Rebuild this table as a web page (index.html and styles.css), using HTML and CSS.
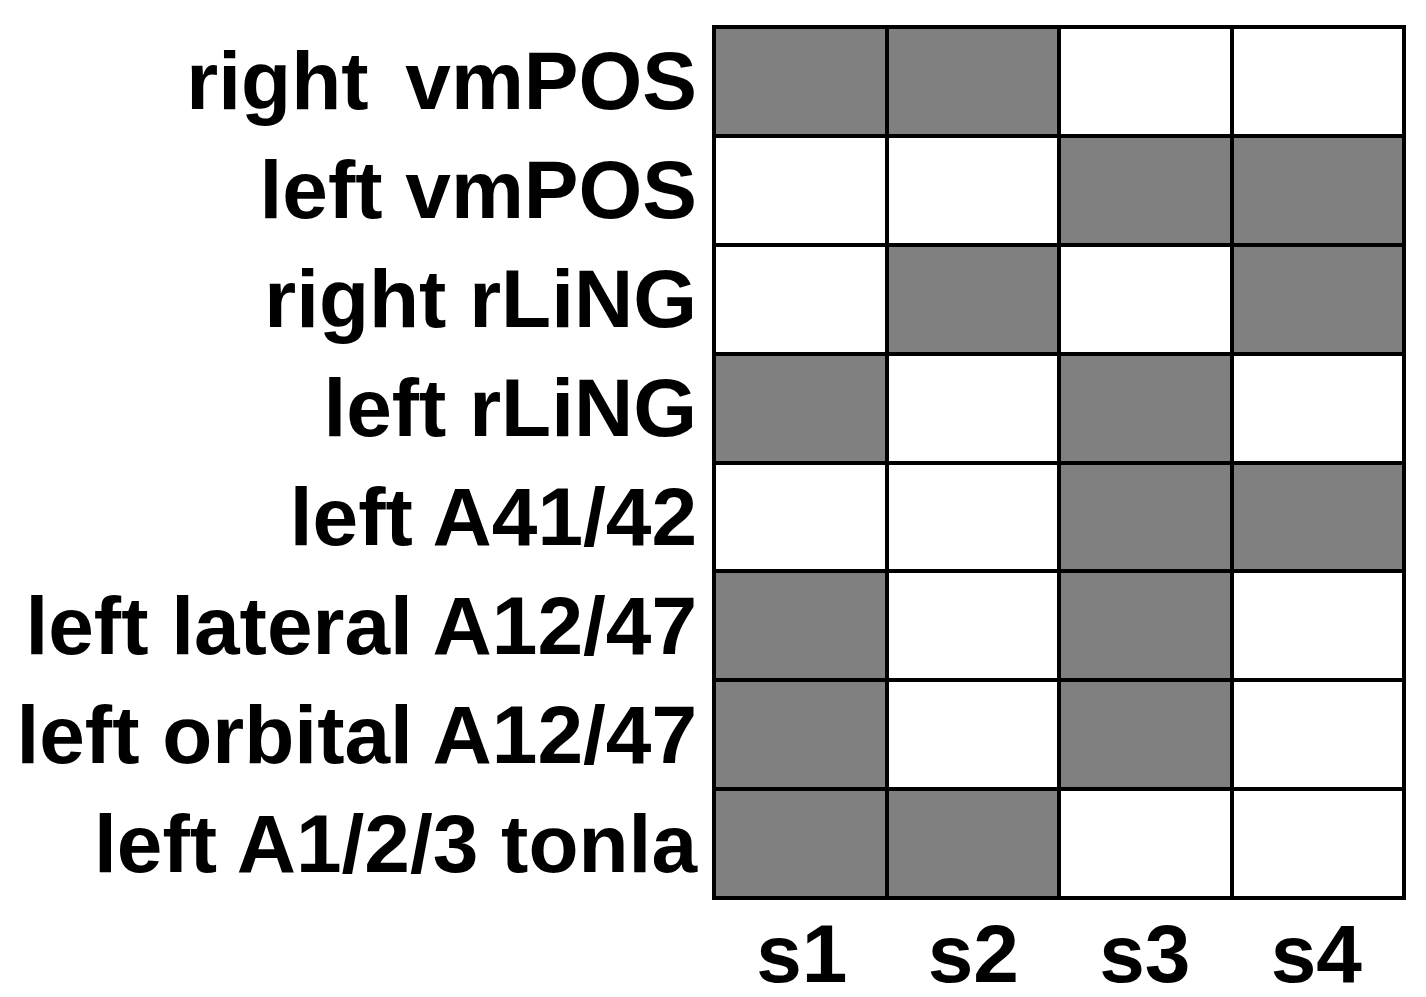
FILE: index.html
```html
<!DOCTYPE html>
<html lang="en">
<head>
    <meta charset="UTF-8">
    <meta name="viewport" content="width=device-width, initial-scale=1.0">
    <title>Region by Session Map</title>
    <link rel="stylesheet" href="styles.css">
</head>
<body>

    <div class="figure">
        <!-- Row labels -->
        <div class="row-labels">
            <div class="label wide-gap">right vmPOS</div>
            <div class="label">left vmPOS</div>
            <div class="label">right rLiNG</div>
            <div class="label">left rLiNG</div>
            <div class="label">left A41/42</div>
            <div class="label">left lateral A12/47</div>
            <div class="label">left orbital A12/47</div>
            <div class="label">left A1/2/3 tonla</div>
        </div>

        <!-- Grid of cells -->
        <div class="grid">
            <div class="cell on"></div><div class="cell on"></div><div class="cell"></div><div class="cell"></div>
            <div class="cell"></div><div class="cell"></div><div class="cell on"></div><div class="cell on"></div>
            <div class="cell"></div><div class="cell on"></div><div class="cell"></div><div class="cell on"></div>
            <div class="cell on"></div><div class="cell"></div><div class="cell on"></div><div class="cell"></div>
            <div class="cell"></div><div class="cell"></div><div class="cell on"></div><div class="cell on"></div>
            <div class="cell on"></div><div class="cell"></div><div class="cell on"></div><div class="cell"></div>
            <div class="cell on"></div><div class="cell"></div><div class="cell on"></div><div class="cell"></div>
            <div class="cell on"></div><div class="cell on"></div><div class="cell"></div><div class="cell"></div>
        </div>

        <!-- Column labels -->
        <div class="col-labels">
            <div class="label">s1</div>
            <div class="label">s2</div>
            <div class="label">s3</div>
            <div class="label">s4</div>
        </div>
    </div>

</body>
</html>
```

FILE: styles.css
```css
/* General Reset */
* {
    margin: 0;
    padding: 0;
    box-sizing: border-box;
}

body {
    font-family: "Liberation Sans", Arial, sans-serif;
    font-weight: bold;
    background-color: #fff;
    color: #000;
}

/* Figure Layout */
.figure {
    display: grid;
    grid-template-columns: 697px 694px;
    column-gap: 15px;
    padding-top: 25px;
}

.label {
    font-size: 82px;
    line-height: 1;
    white-space: nowrap;
}

/* Row Labels */
.row-labels {
    display: grid;
    grid-template-rows: repeat(8, 1fr);
    row-gap: 4px;
    padding: 4px 0;
    height: 875px;
}

.row-labels .label {
    display: flex;
    align-items: center;
    justify-content: flex-end;
}

.wide-gap {
    word-spacing: 14px;
}

/* Cell Grid */
.grid {
    display: grid;
    grid-template-columns: repeat(4, 1fr);
    grid-template-rows: repeat(8, 1fr);
    gap: 4px;
    padding: 4px;
    height: 875px;
    background-color: #000;
}

.cell {
    background-color: #fff;
}

.cell.on {
    background-color: #808080;
}

/* Column Labels */
.col-labels {
    grid-column: 2;
    display: grid;
    grid-template-columns: repeat(4, 1fr);
    padding: 0 4px;
    margin-top: 13px;
    text-align: center;
}
```
